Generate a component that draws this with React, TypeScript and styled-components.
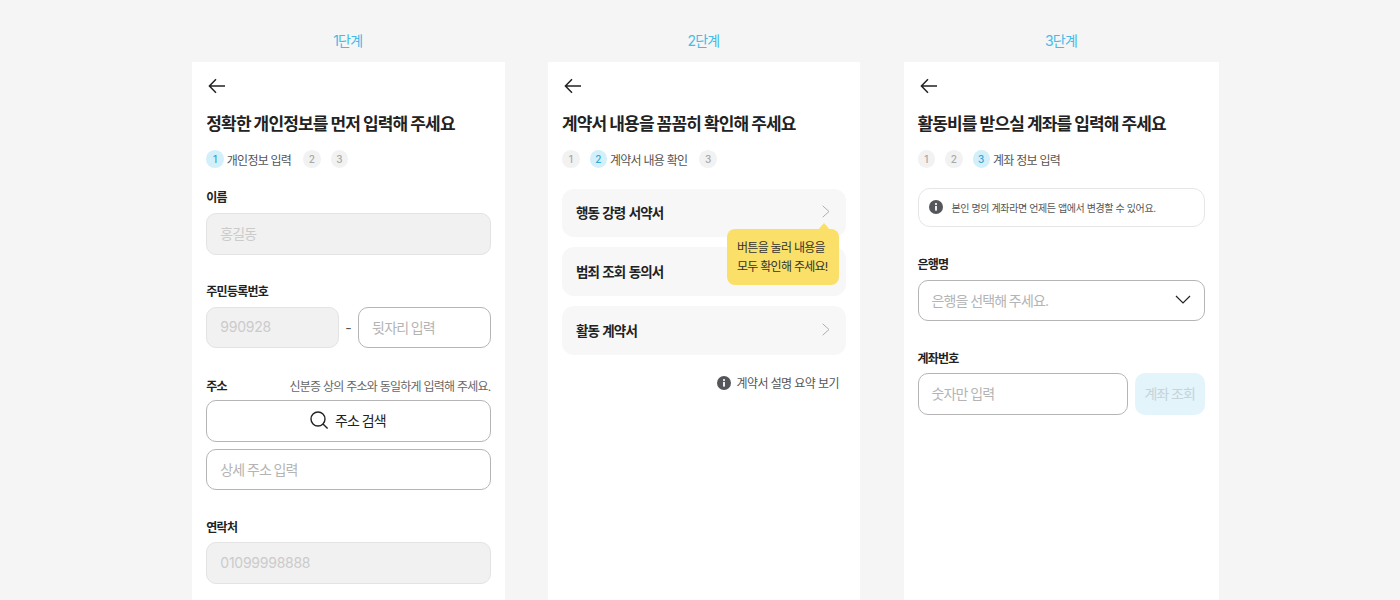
import React from "react";
import styled, { createGlobalStyle } from "styled-components";

const Global = createGlobalStyle`
  html, body { margin: 0; padding: 0; height: 100%; overflow: hidden; background: #f5f5f5; }
  body { font-family: Inter, "Noto Sans CJK KR", sans-serif; color: #222; }
  * { box-sizing: border-box; }
`;

const Page = styled.div`
  display: flex;
  height: 600px;
  overflow: hidden;
  padding-left: 192px;
  background: #f5f5f5;
`;

const Column = styled.section<{ $w: number; $gap: number }>`
  width: ${(p) => p.$w}px;
  margin-right: ${(p) => p.$gap}px;
  flex: none;
  display: flex;
  flex-direction: column;
`;

const StepCaption = styled.div`
  height: 62px;
  padding: 32px 1px 0 0;
  text-align: center;
  font-size: 14px;
  line-height: 18px;
  letter-spacing: -0.8px;
  color: #45bbe8;
`;

const Panel = styled.div<{ $left?: number }>`
  flex: 1;
  background: #fff;
  padding: 12px 14px 0 ${(p) => p.$left ?? 14}px;
  position: relative;
`;

const BackButton = styled.div`
  height: 24px;
  padding-left: 1px;
  display: flex;
  align-items: center;
  color: #222;
`;

const Title = styled.h2`
  margin: 13px 0 0;
  height: 26px;
  font-size: 17px;
  line-height: 26px;
  font-weight: 600;
  letter-spacing: -0.85px;
  word-spacing: -0.5px;
  color: #222;
  white-space: nowrap;
`;

const Stepper = styled.div`
  margin-top: 13px;
  height: 18px;
  display: flex;
  align-items: center;
`;

const Dot = styled.span<{ $active?: boolean }>`
  width: 17.5px;
  height: 17.5px;
  border-radius: 50%;
  flex: none;
  display: flex;
  align-items: center;
  justify-content: center;
  font-size: 10px;
  font-weight: 500;
  background: ${(p) => (p.$active ? "#d3f0fa" : "#f2f2f2")};
  color: ${(p) => (p.$active ? "#38a3d1" : "#a8a8a8")};
  margin-right: 10px;
`;

const StepName = styled.span`
  font-size: 12px;
  letter-spacing: -0.75px;
  color: #555;
  margin: 0 12px 0 -7px;
  white-space: nowrap;
`;

const LabelRow = styled.div<{ $top: number }>`
  margin-top: ${(p) => p.$top}px;
  height: 16px;
  display: flex;
  justify-content: space-between;
  align-items: center;
`;

const Label = styled.span`
  font-size: 12px;
  font-weight: 600;
  letter-spacing: -0.75px;
  color: #222;
`;

const Hint = styled.span`
  font-size: 12px;
  letter-spacing: -0.75px;
  color: #666;
  white-space: nowrap;
`;

const Box = styled.div<{ $disabled?: boolean; $top?: number; $w?: number; $digits?: boolean }>`
  margin-top: ${(p) => p.$top ?? 8}px;
  height: 41.5px;
  ${(p) => (p.$w ? `width: ${p.$w}px; flex: none;` : "")}
  border-radius: 10px;
  border: 1px solid ${(p) => (p.$disabled ? "#e3e3e3" : "#b5b5b5")};
  background: ${(p) => (p.$disabled ? "#f1f1f1" : "#fff")};
  display: flex;
  align-items: center;
  padding: 0 13px 1.5px;
  font-size: 14px;
  letter-spacing: ${(p) => (p.$digits ? "-0.25px" : "-0.85px")};
  word-spacing: ${(p) => (p.$digits ? "0" : "-0.5px")};
  color: ${(p) => (p.$disabled ? "#cbcbcb" : "#b4b4b4")};
  white-space: nowrap;
`;

const InputRow = styled.div`
  display: flex;
  align-items: center;
  justify-content: space-between;
  margin-top: 8px;
  & > div { margin-top: 0; }
`;

const Dash = styled.span`
  flex: 1;
  text-align: center;
  font-size: 14px;
  color: #555;
`;

const SearchButton = styled(Box)`
  justify-content: center;
  gap: 6px;
  padding-right: 15px;
  color: #222;
`;

const SelectBox = styled(Box)`
  justify-content: space-between;
`;

const DocList = styled.div`
  margin-top: 20.5px;
  display: flex;
  flex-direction: column;
  gap: 10.7px;
`;

const DocRow = styled.div`
  height: 48.3px;
  border-radius: 12px;
  background: #f7f7f7;
  display: flex;
  align-items: center;
  justify-content: space-between;
  padding: 0 16px 1.5px 14px;
  font-size: 13.5px;
  font-weight: 600;
  letter-spacing: -0.9px;
  word-spacing: 0.8px;
  color: #222;
`;

const Tooltip = styled.div`
  position: absolute;
  left: 179px;
  top: 167px;
  width: 112px;
  height: 56px;
  border-radius: 8px;
  background: #fadf68;
  padding: 10px;
  font-size: 12px;
  line-height: 18.5px;
  letter-spacing: -0.72px;
  color: #333;
  white-space: nowrap;
  &::before {
    content: "";
    position: absolute;
    right: 9px;
    top: -6px;
    border-left: 6px solid transparent;
    border-right: 6px solid transparent;
    border-bottom: 7px solid #fadf68;
  }
`;

const InfoLink = styled.div`
  margin-top: 19px;
  padding-right: 7px;
  height: 18px;
  display: flex;
  justify-content: flex-end;
  align-items: center;
  gap: 5px;
  font-size: 12px;
  letter-spacing: -0.58px;
  color: #555;
`;

const Notice = styled.div`
  margin-top: 20px;
  height: 38.5px;
  border: 1px solid #e6e6e6;
  border-radius: 12px;
  display: flex;
  align-items: center;
  gap: 8.5px;
  padding: 0 10.5px;
  font-size: 10px;
  letter-spacing: -0.4px;
  color: #555;
  white-space: nowrap;
`;

const VerifyButton = styled.div`
  margin-left: 7px;
  flex: 1;
  height: 41.5px;
  border-radius: 10px;
  background: #e3f4fb;
  color: #c6d3d9;
  font-size: 14px;
  letter-spacing: -0.85px;
  word-spacing: -0.5px;
  display: flex;
  align-items: center;
  justify-content: center;
  white-space: nowrap;
  padding-bottom: 1.5px;
`;

const Arrow = () => (
  <svg width="20" height="16" viewBox="0 0 20 16" fill="none" stroke="currentColor" strokeWidth="1.5">
    <path d="M2.5 8H18M9 1.2 2.4 8 9 14.8" />
  </svg>
);
const Chevron = () => (
  <svg width="8" height="13" viewBox="0 0 8 13" fill="none" stroke="#aeaeae" strokeWidth="1">
    <path d="M.7.8 7 6.5.7 12.2" />
  </svg>
);
const Info = ({ size }: { size: number }) => (
  <svg width={size} height={size} viewBox="0 0 14 14">
    <circle cx="7" cy="7" r="7" fill="#55565c" />
    <rect x="6.1" y="6" width="1.8" height="4.6" fill="#fff" />
    <circle cx="7" cy="4.1" r="1.05" fill="#fff" />
  </svg>
);
const SearchIcon = () => (
  <svg width="20" height="20" viewBox="0 0 20 20" fill="none" stroke="#222" strokeWidth="1.4">
    <circle cx="9" cy="9" r="7" />
    <path d="M14 14l4.6 4.6" />
  </svg>
);
const Caret = () => (
  <svg width="16" height="9" viewBox="0 0 16 9" fill="none" stroke="#222" strokeWidth="1.2">
    <path d="M1 1 8 8l7-7" />
  </svg>
);

const Steps = ({ active, name }: { active: number; name: string }) => (
  <Stepper>
    {[1, 2, 3].map((n) => (
      <React.Fragment key={n}>
        <Dot $active={n === active}>{n}</Dot>
        {n === active && <StepName>{name}</StepName>}
      </React.Fragment>
    ))}
  </Stepper>
);

export default function App() {
  return (
    <Page>
      <Global />
      <Column $w={312.5} $gap={43.5}>
        <StepCaption>1단계</StepCaption>
        <Panel $left={14.3}>
          <BackButton><Arrow /></BackButton>
          <Title>정확한 개인정보를 먼저 입력해 주세요</Title>
          <Steps active={1} name="개인정보 입력" />
          <LabelRow $top={20}><Label>이름</Label></LabelRow>
          <Box $disabled $top={9}>홍길동</Box>
          <LabelRow $top={28}><Label>주민등록번호</Label></LabelRow>
          <InputRow>
            <Box $disabled $digits $w={132.4}>990928</Box>
            <Dash>-</Dash>
            <Box $w={132.4}>뒷자리 입력</Box>
          </InputRow>
          <LabelRow $top={29}><Label>주소</Label><Hint>신분증 상의 주소와 동일하게 입력해 주세요.</Hint></LabelRow>
          <SearchButton $top={7}><SearchIcon />주소 검색</SearchButton>
          <Box $top={7}>상세 주소 입력</Box>
          <LabelRow $top={28}><Label>연락처</Label></LabelRow>
          <Box $disabled $digits>01099998888</Box>
        </Panel>
      </Column>
      <Column $w={312} $gap={44}>
        <StepCaption>2단계</StepCaption>
        <Panel>
          <BackButton><Arrow /></BackButton>
          <Title>계약서 내용을 꼼꼼히 확인해 주세요</Title>
          <Steps active={2} name="계약서 내용 확인" />
          <DocList>
            <DocRow>행동 강령 서약서<Chevron /></DocRow>
            <DocRow>범죄 조회 동의서<Chevron /></DocRow>
            <DocRow>활동 계약서<Chevron /></DocRow>
          </DocList>
          <InfoLink><Info size={14} />계약서 설명 요약 보기</InfoLink>
          <Tooltip>버튼을 눌러 내용을<br />모두 확인해 주세요!</Tooltip>
        </Panel>
      </Column>
      <Column $w={315} $gap={0}>
        <StepCaption>3단계</StepCaption>
        <Panel $left={13.5}>
          <BackButton><Arrow /></BackButton>
          <Title>활동비를 받으실 계좌를 입력해 주세요</Title>
          <Steps active={3} name="계좌 정보 입력" />
          <Notice><Info size={14} />본인 명의 계좌라면 언제든 앱에서 변경할 수 있어요.</Notice>
          <LabelRow $top={29}><Label>은행명</Label></LabelRow>
          <SelectBox>은행을 선택해 주세요.<Caret /></SelectBox>
          <LabelRow $top={28}><Label>계좌번호</Label></LabelRow>
          <InputRow>
            <Box $w={210}>숫자만 입력</Box>
            <VerifyButton>계좌 조회</VerifyButton>
          </InputRow>
        </Panel>
      </Column>
    </Page>
  );
}
